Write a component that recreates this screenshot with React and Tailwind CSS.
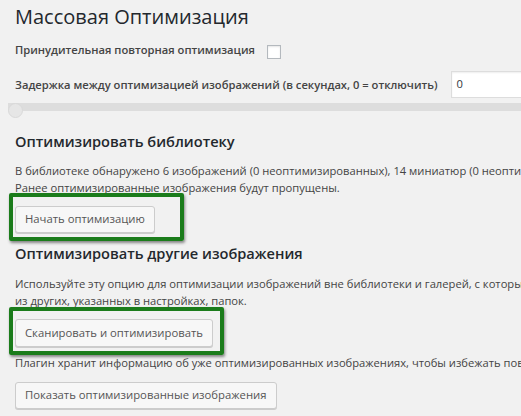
import React from "react";

const Button = ({ children, className = "" }) => (
  <button
    className={`h-[27px] px-[9px] border border-[#cccccc] bg-[#f7f7f7] text-[#555] text-[11.3px] rounded-[3px] shadow-[0_1px_0_#cccccc] whitespace-nowrap ${className}`}
  >
    {children}
  </button>
);

// hand-drawn highlight frame around a button
const Highlight = ({ className }) => (
  <div
    className={`absolute border-[4px] border-[#1b7c1b] rounded-[2px] shadow-[1px_2px_3px_rgba(0,0,0,0.45)] pointer-events-none ${className}`}
  />
);

export default function App() {
  return (
    <div
      className="w-full h-[416px] overflow-hidden bg-[#f1f1f1] text-[#444] text-[11.2px]"
      style={{ fontFamily: '"Open Sans", "Noto Sans", sans-serif' }}
    >
      <div className="pl-[15px]">
        <h1 className="pt-[2px] text-[20px] leading-[29px] font-normal text-[#23282d] whitespace-nowrap">
          Массовая Оптимизация
        </h1>

        <div className="mt-[11px] flex items-center h-[16px]">
          <span className="font-semibold leading-[16px] whitespace-nowrap">
            Принудительная повторная оптимизация
          </span>
          <span className="ml-[12px] mt-[4px] w-[14px] h-[14px] bg-white border border-[#b4b9be] shadow-[inset_0_1px_2px_rgba(0,0,0,0.1)] shrink-0" />
        </div>

        <div className="mt-[13px] flex items-center whitespace-nowrap">
          <span className="font-semibold leading-[16px]">
            Задержка между оптимизацией изображений (в секундах, 0 = отключить)
          </span>
          <div className="ml-[13px] w-[120px] h-[27px] shrink-0 bg-white border border-[#dddddd] shadow-[inset_0_1px_2px_rgba(0,0,0,0.07)] flex items-center pl-[5px] text-[#32373c]">
            0
          </div>
        </div>

        <div className="relative -ml-[7px] mt-[5px] h-[16px]">
          <div className="mt-[5px] h-[8px] bg-[#dddddd]" />
          <div className="absolute left-0 top-0 w-[15px] h-[15px] rounded-full bg-[#e6e6e6] border border-[#d9d9d9]" />
        </div>

        <h2 className="mt-[11px] text-[14.6px] leading-[22px] font-semibold text-[#23282d] whitespace-nowrap">
          Оптимизировать библиотеку
        </h2>
        <p className="mt-[10px] leading-[17px] whitespace-nowrap">
          В библиотеке обнаружено 6 изображений (0 неоптимизированных), 14 миниатюр (0 неоптимизированных).
          <br />
          Ранее оптимизированные изображения будут пропущены.
        </p>
        <div className="relative inline-block mt-[10px]">
          <Button>Начать оптимизацию</Button>
          <Highlight className="-left-[6px] -top-[13px] -right-[29px] -bottom-[8px]" />
        </div>

        <h2 className="mt-[9px] text-[14.6px] leading-[22px] font-semibold text-[#23282d] whitespace-nowrap">
          Оптимизировать другие изображения
        </h2>
        <p className="mt-[11px] leading-[17px] whitespace-nowrap">
          Используйте эту опцию для оптимизации изображений вне библиотеки и галерей, с которыми работают другие плагины, а также
          <br />
          из других, указанных в настройках, папок.
        </p>
        <div className="relative inline-block mt-[10px]">
          <Button className="h-[28px]">Сканировать и оптимизировать</Button>
          <Highlight className="-left-[6px] -top-[12px] -right-[11px] -bottom-[8px]" />
        </div>

        <p className="mt-[7px] leading-[17px] whitespace-nowrap">
          Плагин хранит информацию об уже оптимизированных изображениях, чтобы избежать повторной оптимизации.
        </p>
        <Button className="mt-[11px]">Показать оптимизированные изображения</Button>
      </div>
    </div>
  );
}
